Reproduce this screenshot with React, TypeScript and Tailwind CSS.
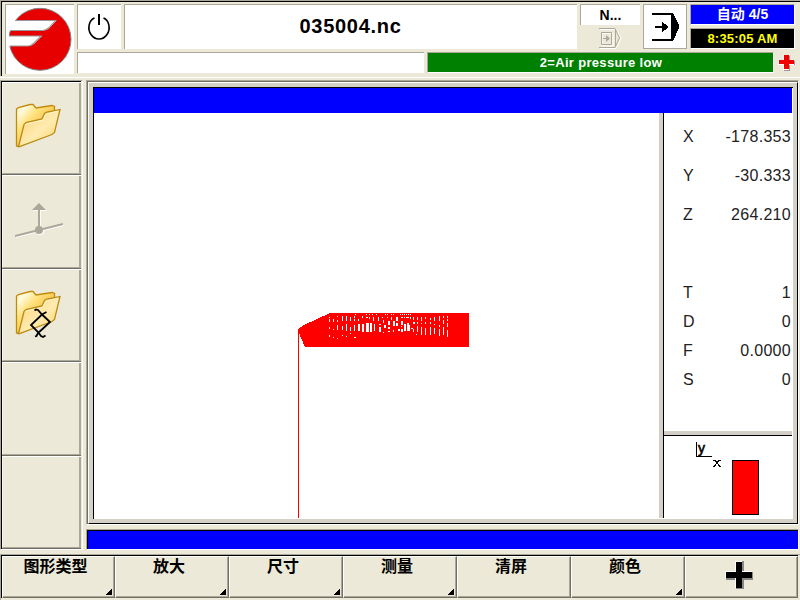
import React from "react";

const Folder = ({ id }: { id: string }) => (
  <svg width="48" height="46" viewBox="0 0 48 46">
    <defs>
      <linearGradient id={id + "b"} x1="0" y1="0" x2="1" y2="1">
        <stop offset="0" stopColor="#ffe9a0" />
        <stop offset="0.14" stopColor="#fffbe0" />
        <stop offset="0.35" stopColor="#ffe07a" />
        <stop offset="1" stopColor="#e09a10" />
      </linearGradient>
      <linearGradient id={id + "f"} x1="0" y1="0" x2="1" y2="1">
        <stop offset="0" stopColor="#ffcf70" />
        <stop offset="0.55" stopColor="#ffebb0" />
        <stop offset="1" stopColor="#fbd25c" />
      </linearGradient>
    </defs>
    <path d="M1.5 6 L3.5 4.5 L15 1.5 L18 1.5 L21 5 L37 2.5 L39.5 3.5 L39.5 10 L37 29 L35 31 L4 43.5 L1.5 43 Z" fill={`url(#${id}b)`} stroke="#c08a08" strokeWidth="1.3" />
    <path d="M3.5 43.5 L9 21.5 L11 19.5 L27 16 L29.5 10.5 L32 9 L45 6.5 L39.5 29.5 L37 31.5 L4.5 43.5 Z" fill={`url(#${id}f)`} stroke="#b98b12" strokeWidth="1.3" />
    <path d="M10 22 L12 20.8 L28 17.2 L30.5 11.5 L43 8" fill="none" stroke="#fff5cc" strokeWidth="1" />
  </svg>
);

const SideButton = ({ children }: { children?: React.ReactNode }) => (
  <div className="min-h-0 flex-1 border-t border-b border-t-white border-b-[#716f64]">
    <div className="h-full border-r-2 border-b border-l border-[#aca899] border-l-[#f8f6ee] pt-[20px] pl-[12px]">{children}</div>
  </div>
);

const softKeys = [
  { label: "图形类型", menu: true },
  { label: "放大", menu: true },
  { label: "尺寸", menu: true },
  { label: "测量", menu: true },
  { label: "清屏", menu: false },
  { label: "颜色", menu: true },
];

const positions = [
  ["X", "-178.353"],
  ["Y", "-30.333"],
  ["Z", "264.210"],
];
const technology = [
  ["T", "1"],
  ["D", "0"],
  ["F", "0.0000"],
  ["S", "0"],
];

// Uncut gaps between neighbouring passes: x, y, width, height
const gaps: number[][] = [
  [329,317,1,1],[329,319,1,3],[329,327,1,2],[329,335,1,2],
  [333,319,1,3],[333,329,1,1],[333,337,1,1],
  [337,316,1,1],[337,320,1,2],[337,325,1,5],[337,338,1,1],
  [342,316,1,5],[342,326,1,4],[342,335,1,1],
  [346,316,1,5],[346,324,1,7],[346,336,1,1],
  [350,317,1,4],[350,327,1,4],[350,333,1,1],
  [354,316,1,2],[354,319,1,2],[354,325,1,6],
  [355,314,1,1],[354,337,2,1],
  [358,319,1,2],[358,324,2,7],[362,316,1,2],[362,324,2,8],
  [366,314,1,1],[366,317,2,1],[366,323,2,9],[368,323,1,9],
  [369,314,1,1],[369,317,1,2],[370,323,2,9],
  [372,314,1,1],[373,317,1,4],[374,324,1,7],[376,314,1,1],
  [378,317,1,4],[379,324,2,1],[379,327,2,5],
  [382,317,1,1],[383,320,1,3],[384,325,2,3],[383,332,1,1],
  [385,314,1,1],[387,314,1,1],[387,317,1,1],
  [388,321,2,4],[388,327,2,2],[388,331,2,1],
  [391,314,1,1],[391,317,1,3],[393,314,1,1],[393,321,2,5],[393,330,1,2],
  [396,317,2,4],[396,323,2,3],[398,329,2,2],
  [400,314,1,1],[401,317,2,1],[401,321,2,4],[401,326,1,1],[401,329,2,3],
  [402,314,1,1],[404,314,1,1],[404,324,2,7],[407,323,2,8],[404,317,1,1],
  [406,314,1,1],[406,317,3,1],[408,314,1,1],[410,314,1,1],
  [410,317,1,2],[409,325,1,6],[411,328,2,1],
  [413,317,1,3],[413,322,2,2],[413,329,1,3],
  [417,317,1,3],[417,322,1,2],[417,326,1,6],[416,334,1,1],
  [421,317,1,4],[421,323,1,1],[421,327,1,8],
  [425,317,1,2],[425,322,1,2],[425,328,1,7],
  [430,318,1,2],[430,322,1,2],[430,327,1,8],
  [434,317,1,4],[434,324,1,1],[434,328,1,6],
  [439,316,1,5],[439,325,1,2],[439,329,1,7],
  [443,316,1,2],[443,320,1,4],[443,327,1,8],
  [447,316,1,2],[447,319,1,2],[447,323,1,4],[447,330,1,7],
];

export default function App() {
  return (
    <div className="flex h-[600px] w-[800px] flex-col overflow-hidden bg-[#ece9d8] font-['Liberation_Sans','Noto_Sans_CJK_SC',sans-serif] text-black">
      {/* Status header */}
      <header className="flex h-[80px] shrink-0 flex-col border-t border-[#aca899]">
        <div className="flex h-[75px] border-l border-l-[#aca899]">
          <div className="flex w-full gap-[3px] border-t border-l border-black pt-[2px] pl-[3px]">
            <div className="h-[70px] w-[69px] shrink-0 border-t border-l border-[#aca899] bg-white">
              <svg width="68" height="68" viewBox="6 5 68 68">
                <circle cx="40" cy="39.3" r="31" fill="#e60000" stroke="#858585" strokeWidth="1" />
                <path d="M7 20.5 H56.5 L49 28.5 Q46 30.5 43 30.5 H7 Z M7 36 H42 L34 44 Q31 46 28 46 H7 Z" fill="white" />
                <path d="M15 20.5 H55.5 L49 27.5 Q46 30.5 43 30.5 H10.5 M9 36 H41 L34 43 Q31 46 28 46 H10" fill="none" stroke="#999" strokeWidth="1.1" />
              </svg>
            </div>
            <div className="flex flex-col gap-[3px]">
              <div className="flex h-[45px] gap-[3px]">
                <div className="w-[44px] border-t border-l border-[#aca899] bg-white">
                  <svg width="43" height="44" viewBox="78 5 43 44">
                    <path d="M94.5 18 C89 20 87 29 91 34.5 C95 40.5 103 40.5 107 34.5 C111 29 109 20 103.5 18" fill="none" stroke="black" strokeWidth="1.6" />
                    <rect x="98" y="14" width="2" height="11" fill="black" />
                  </svg>
                </div>
                <div className="w-[453px] border-t border-l border-[#aca899] bg-white pt-[9px] pr-[1px] text-center text-[20px] leading-[24px] font-bold tracking-[0.7px]">035004.nc</div>
                <div className="flex w-[60px] flex-col">
                  <div className="h-[21px] border-t border-l border-[#aca899] bg-white text-center text-[14px] leading-[20px] font-bold">N...</div>
                  <svg width="60" height="24" viewBox="580 25 60 24">
                    <path d="M600 29.5 H616 L621 38.5 L616 48.5 H600 M602 33.5 H613 V46 H602 Z" fill="none" stroke="white" />
                    <path d="M599 28.5 H615 L619.5 38 L615 47.5 H599 M601.5 32.5 H611.5 V44.5 H601.5 Z M615.5 29 V47 M603 38.5 H608" fill="none" stroke="#aca899" />
                    <path d="M606 35 L610 38.5 L606 42 Z" fill="#aca899" />
                  </svg>
                </div>
                <div className="w-[44px] border border-[#aca899] bg-white">
                  <svg width="42" height="43" viewBox="644 5 42 43" shapeRendering="crispEdges">
                    <path d="M652 14 H672 M652 40 H672 M655 27 H664" stroke="black" strokeWidth="2" />
                    <path d="M671 13 H673 L679 25 V28 L673 41 H671 Z M662 21.5 L668.5 27 L662 32.5 Z" fill="black" />
                  </svg>
                </div>
                <div className="flex w-[105px] flex-col gap-[3px] text-center font-bold">
                  <div className="h-[21px] border border-[#aca899] border-r-white border-b-white bg-[#0000ff] text-[14px] leading-[19px] text-white">自动 4/5</div>
                  <div className="h-[21px] border border-[#aca899] border-r-white border-b-white bg-black text-[13px] leading-[19px] tracking-[0.2px] text-[#ffff00]">8:35:05 AM</div>
                </div>
              </div>
              <div className="flex h-[21px] gap-[3px]">
                <div className="w-[347px] border-t border-l border-[#aca899] bg-white" />
                <div className="w-[347px] border border-[#aca899] border-r-white border-b-white bg-[#008000] pl-[1px] text-center text-[13px] leading-[19px] font-bold tracking-[0.32px] text-white">2=Air pressure low</div>
                <svg width="18" height="20" viewBox="777 53 18 20" shapeRendering="crispEdges">
                  <path d="M784 57 h6 v5 h5 v4 h-5 v6 h-6" fill="#999" />
                  <path d="M783 56 h5 v5 h5 v4 h-5 v5 h-5 v-5 h-5 v-4 h5 Z" fill="#f00000" stroke="white" />
                  <path d="M784 56 h5 v5 h5 v4 h-5 v5 h-5 v-5 h-5 v-4 h5 Z" fill="#f00000" />
                </svg>
              </div>
            </div>
          </div>
        </div>
        <div className="mt-px h-px bg-white" />
      </header>

      <main className="flex h-[474px] shrink-0">
        {/* Vertical function keys */}
        <aside className="h-[470px] w-[83px] border-t border-r border-b border-l border-[#aca899] border-r-white border-b-white">
          <div className="flex h-full w-[80px] flex-col border-t border-l border-black">
            <SideButton><Folder id="open" /></SideButton>
            <SideButton>
              <svg width="54" height="60" viewBox="15 196 54 60">
                <g transform="translate(1 1)" stroke="white" fill="white"><path d="M39 210 V230 M15 236 L63 224" strokeWidth="1.5" /><path d="M32 210 L39 203 L46 210 Z" stroke="none" /><circle cx="39" cy="230" r="4" stroke="none" /></g>
                <path d="M39 209 V230 M15 236 L63 224" stroke="#aca899" strokeWidth="2" fill="none" />
                <path d="M32 210 L39 203 L46 210 Z" fill="#aca899" />
                <circle cx="39" cy="230" r="4" fill="#aca899" />
              </svg>
            </SideButton>
            <SideButton>
              <div className="relative">
                <Folder id="path" />
                <svg className="absolute top-0 left-0" width="50" height="52" viewBox="15 291 50 52">
                  <path d="M34.5 311.5 L36 310.5 L38 311 L42 315.5 L50 323 L43 329.5 L38 334 L36.5 337 L35 337.5 M46.5 313 L42 315.5 L31 326 L38 333 L41 337 L43 338 L45.5 336.5" stroke="black" strokeWidth="1.8" fill="none" />
                </svg>
              </div>
            </SideButton>
            <SideButton />
            <SideButton />
          </div>
        </aside>

        <section className="ml-[3px] flex w-[714px] flex-col">
          {/* Graphics window */}
          <div className="h-[445px] w-[713px] border-t border-r border-b border-l border-[#aca899] border-r-white border-b-white">
            <div className="h-[443px] border-t border-l border-[#716f64]">
              <div className="h-[442px] w-[710px] border border-white border-r-black border-b-black bg-[#d4d0c8] pt-[4px] pl-[4px]">
                <div className="flex h-[432px] w-[700px] flex-col border-t border-l border-black bg-white">
                  <div className="h-[25px] w-[698px] shrink-0 bg-[#0000ff]" />
                  <div className="flex h-[406px]">
                    <svg width="565" height="405" viewBox="94 113 565 405" shapeRendering="crispEdges">
                      <path d="M298 329 L304 325 L330 313 H469 V346 L468 347 H305 L298 331 Z" fill="#ff0000" />
                      <rect x="298" y="329" width="1" height="189" fill="#ff0000" />
                      {gaps.map(([x, y, w, h], i) => <rect key={i} x={x} y={y} width={w} height={h} fill="white" />)}
                    </svg>
                    <div className="h-[405px] w-[5px] shrink-0 border-r border-black bg-[#d4d0c8]" />
                    <div className="flex w-[128px] flex-col">
                      <div className="h-[318px] pt-[14px] pr-[1px] pl-[19px] text-[16px] leading-[20px] text-[#222]">
                        <div className="flex flex-col gap-[19px]">
                          {positions.map(([n, v]) => <div key={n} className="flex justify-between"><span>{n}</span><span className="tracking-[0.3px]">{v}</span></div>)}
                        </div>
                        <div className="mt-[58px] flex flex-col gap-[9px]">
                          {technology.map(([n, v]) => <div key={n} className="flex justify-between"><span>{n}</span><span className="tracking-[0.3px]">{v}</span></div>)}
                        </div>
                      </div>
                      <div className="h-[5px] shrink-0 border-b border-black bg-[#d4d0c8]" />
                      <svg width="128" height="82" viewBox="664 436 128 82" shapeRendering="crispEdges">
                        <path d="M696.5 442 V456.5 H712" fill="none" stroke="black" />
                        <text x="698" y="453" fontSize="14" stroke="black" strokeWidth="0.6">y</text>
                        <path d="M713 460.5 h2 l5 6 h1 M721 460.5 h-2 l-5 6 h-1" fill="none" stroke="black" strokeWidth="1.2" />
                        <rect x="732.5" y="460.5" width="26" height="54" fill="#ff0000" stroke="black" />
                      </svg>
                    </div>
                  </div>
                </div>
              </div>
            </div>
          </div>
          {/* Message line */}
          <div className="mt-[4px] h-[21px] w-[713px] border border-[#aca899] border-r-white border-b-white">
            <div className="h-[19px] border-t border-l border-black bg-[#0000ff]" />
          </div>
        </section>
      </main>

      {/* Horizontal soft keys */}
      <footer className="h-[46px] border-t border-l border-[#aca899]">
        <div className="flex h-[43px] w-[797px] border-t border-l border-black">
          {softKeys.map(({ label, menu }) => (
            <div key={label} className="relative h-[42px] w-[114px] shrink-0 border border-white border-r-[#716f64] border-b-[#716f64] first:w-[113px]">
              <div className="h-full border-r border-b border-[#aca899] pr-[5px] text-center text-[16px] leading-[20px] font-bold">{label}</div>
              {menu && <svg className="absolute right-[2px] bottom-[2px]" width="7" height="7" shapeRendering="crispEdges"><path d="M0 7 L7 0 V7 Z" fill="black" /></svg>}
            </div>
          ))}
          <div className="h-[42px] w-[113px] border border-white border-r-[#716f64] border-b-[#716f64]">
            <div className="flex h-full justify-center border-r border-b border-[#aca899] pt-[3px] pr-[4px]">
              <svg width="30" height="30" viewBox="0 0 30 30" shapeRendering="crispEdges">
                <path d="M12 1 h8 v11 h9 v8 h-9 v9 h-8 v-9 h-10 v-8 h10 Z" fill="#888" />
                <path d="M11 1 h7 v10 h10 v7 h-10 v10 h-7 v-10 h-10 v-7 h10 Z" fill="white" />
                <path d="M12 2 h6 v10 h10 v6 h-10 v10 h-6 v-10 h-10 v-6 h10 Z" fill="black" />
              </svg>
            </div>
          </div>
        </div>
      </footer>
    </div>
  );
}
